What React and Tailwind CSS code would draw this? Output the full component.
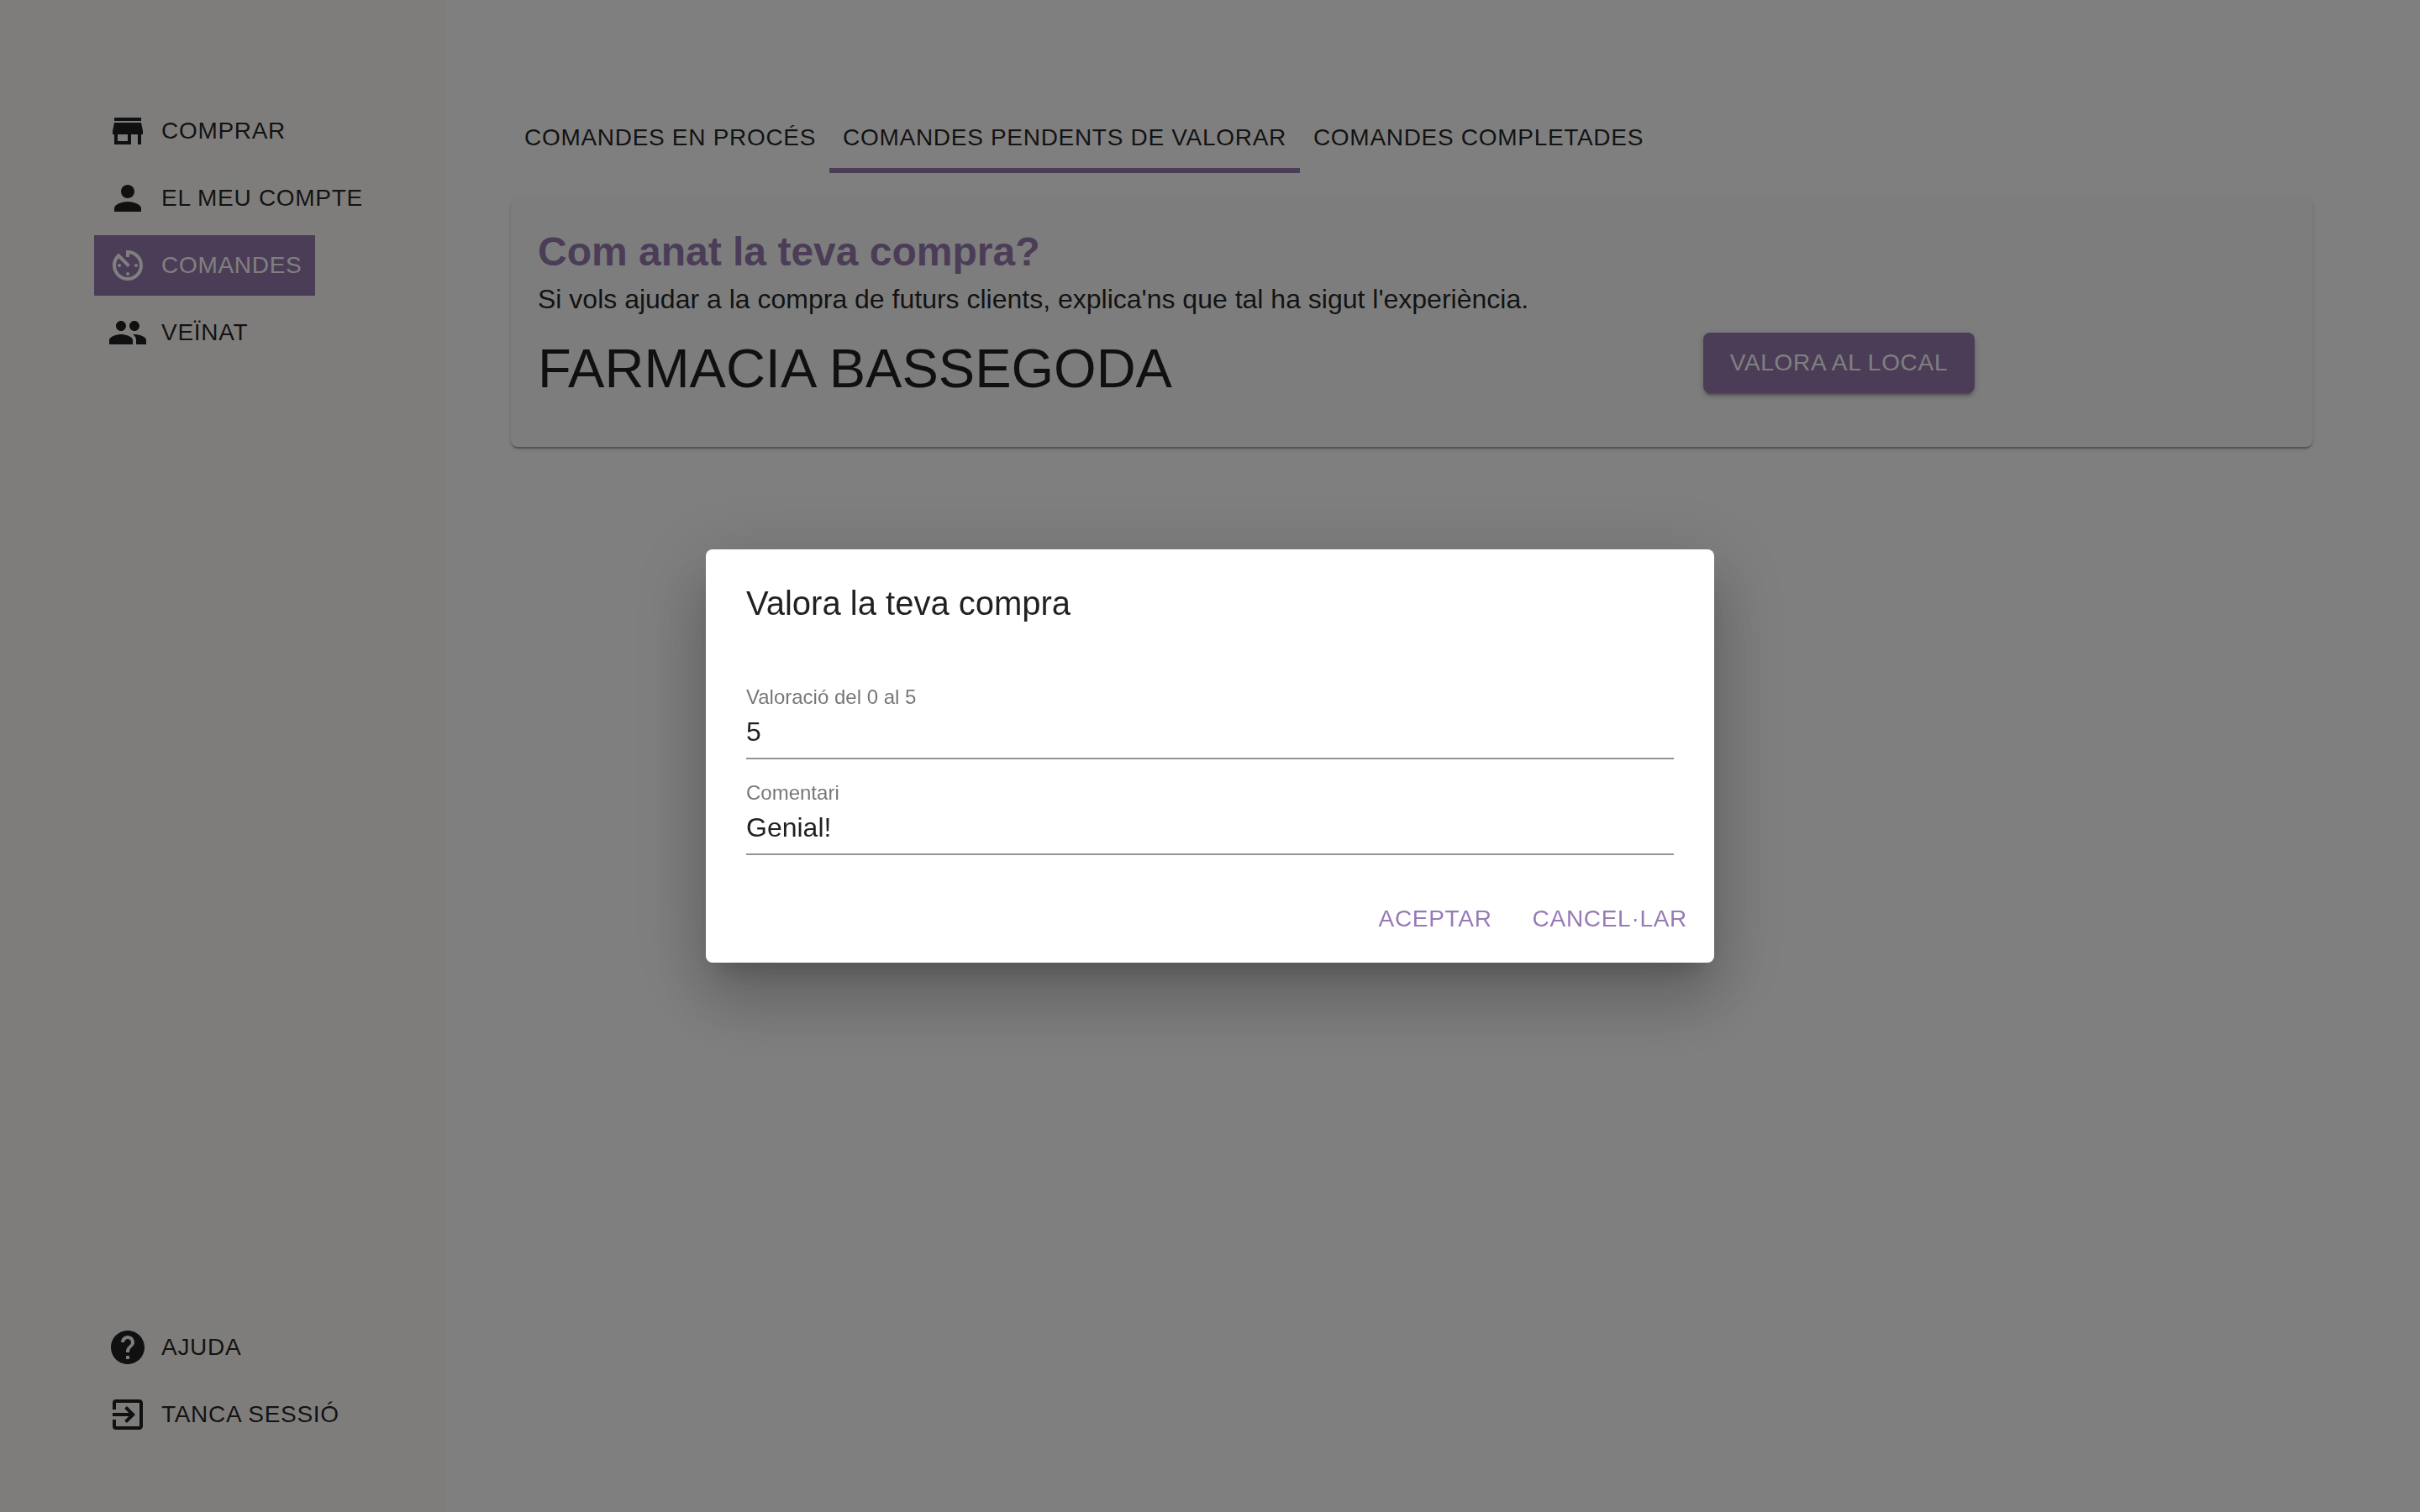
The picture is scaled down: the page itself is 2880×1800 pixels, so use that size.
import React, { useState } from "react";
import { MdStore, MdPerson, MdAvTimer, MdPeople, MdHelp, MdExitToApp } from "react-icons/md";

function NavButton({ icon: Icon, children, active }) {
  return (
    <button
      type="button"
      aria-current={active ? "page" : undefined}
      className={
        "flex h-18 items-center gap-4 px-4 text-[28px] leading-[50px] tracking-wide uppercase " +
        (active ? "bg-[#967bae] text-white" : "text-black/87")
      }
    >
      <Icon className="size-12 shrink-0" aria-hidden="true" />
      {children}
    </button>
  );
}

function Tab({ children, active }) {
  return (
    <button
      type="button"
      role="tab"
      aria-selected={!!active}
      className={
        "border-b-6 px-4 py-3 text-[28px] leading-[48px] tracking-wide uppercase " +
        (active ? "border-[#967bae]" : "border-transparent")
      }
    >
      {children}
    </button>
  );
}

function Field({ id, label, value, onChange, ...rest }) {
  return (
    <div className="flex flex-col">
      <label htmlFor={id} className="text-2xl leading-[32px] text-black/54">
        {label}
      </label>
      <input
        id={id}
        value={value}
        onChange={(e) => onChange(e.target.value)}
        className="h-[58px] w-full border-b-2 border-black/42 pt-1.5 pb-3 text-[32px] leading-[38px] outline-none"
        {...rest}
      />
    </div>
  );
}

function ActionButton({ children }) {
  return (
    <button
      type="button"
      className="rounded-lg px-4 py-3 text-[28px] leading-[48px] tracking-wide text-[#967bb6] uppercase"
    >
      {children}
    </button>
  );
}

export default function App() {
  const [rating, setRating] = useState("5");
  const [comment, setComment] = useState("Genial!");

  return (
    <div className="font-['Liberation_Sans',Arial,sans-serif] text-black/87">
      <div className="flex min-h-screen bg-white">
        <aside className="flex w-[530px] shrink-0 flex-col justify-between bg-[#fefbf7] pt-30 pb-20 pl-28">
          <nav className="flex flex-col items-start gap-2">
            <NavButton icon={MdStore}>Comprar</NavButton>
            <NavButton icon={MdPerson}>El meu compte</NavButton>
            <NavButton icon={MdAvTimer} active>Comandes</NavButton>
            <NavButton icon={MdPeople}>Veïnat</NavButton>
          </nav>
          <div className="flex flex-col items-start gap-2">
            <NavButton icon={MdHelp}>Ajuda</NavButton>
            <NavButton icon={MdExitToApp}>Tanca sessió</NavButton>
          </div>
        </aside>

        <main className="min-w-0 flex-1 pt-32 pr-32 pl-[78px]">
          <div role="tablist" className="flex">
            <Tab>Comandes en procés</Tab>
            <Tab active>Comandes pendents de valorar</Tab>
            <Tab>Comandes completades</Tab>
          </div>

          <section className="mt-[30px] rounded-lg bg-[#fafafa] px-8 pt-8 pb-[50px] shadow-[0_4px_2px_-2px_rgba(0,0,0,0.2),0_2px_2px_0_rgba(0,0,0,0.14),0_2px_6px_0_rgba(0,0,0,0.12)]">
            <h1 className="text-5xl leading-[64px] font-bold text-[#967bae]">Com anat la teva compra?</h1>
            <p className="text-[32px] leading-[48px]">
              Si vols ajudar a la compra de futurs clients, explica'ns que tal ha sigut l'experiència.
            </p>
            <div className="mt-4 grid grid-cols-3 items-start">
              <h2 className="col-span-2 text-[65px] leading-[86px]">FARMACIA BASSEGODA</h2>
              <button
                type="button"
                className="justify-self-start rounded-lg bg-[#967bae] px-8 py-3 text-[28px] leading-[48px] tracking-wide text-white uppercase shadow-[0_6px_2px_-4px_rgba(0,0,0,0.2),0_4px_4px_0_rgba(0,0,0,0.14),0_2px_10px_0_rgba(0,0,0,0.12)]"
              >
                Valora al local
              </button>
            </div>
          </section>
        </main>
      </div>

      <div className="fixed inset-0 flex items-center justify-center bg-black/50">
        <div
          role="dialog"
          aria-modal="true"
          aria-labelledby="dialog-title"
          className="w-full max-w-[1200px] rounded-lg bg-white shadow-[0_22px_30px_-14px_rgba(0,0,0,0.2),0_48px_76px_6px_rgba(0,0,0,0.14),0_18px_92px_16px_rgba(0,0,0,0.12)]"
        >
          <h2 id="dialog-title" className="px-12 py-8 text-[40px] leading-[64px]">
            Valora la teva compra
          </h2>
          <form className="flex flex-col gap-6 px-12 pt-8 pb-6">
            <Field id="rating" label="Valoració del 0 al 5" value={rating} onChange={setRating} type="number" min="0" max="5" />
            <Field id="comment" label="Comentari" value={comment} onChange={setComment} type="text" />
          </form>
          <div className="flex justify-end gap-4 p-4">
            <ActionButton>Aceptar</ActionButton>
            <ActionButton>Cancel·lar</ActionButton>
          </div>
        </div>
      </div>
    </div>
  );
}
